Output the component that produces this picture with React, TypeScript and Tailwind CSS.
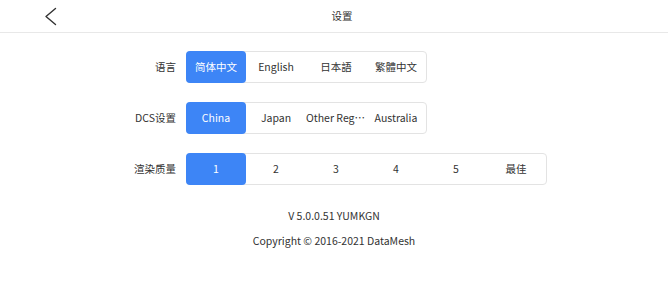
import React, { useState } from 'react';

const FONT = { fontFamily: '"Noto Sans CJK SC", "Noto Sans", sans-serif' };

type Option = { key: string; label: string };

const Segmented: React.FC<{ options: Option[]; value: string; onChange: (v: string) => void }> = ({ options, value, onChange }) => (
    <div className="flex h-[32px] rounded-[4px] border border-[#e3e3e3] bg-white">
        {options.map(opt => (
            <button
                key={opt.key}
                onClick={() => onChange(opt.key)}
                className={`w-[60px] -my-px first:-ml-px h-[32px] truncate px-0 text-[10.5px] leading-[32px] text-center rounded-[4px] ${
                    value === opt.key ? 'bg-[#3d85f6] text-white' : 'text-[#333333]'
                }`}
            >
                {opt.label}
            </button>
        ))}
    </div>
);

const Row: React.FC<{ label: string; children: React.ReactNode }> = ({ label, children }) => (
    <div className="flex items-center">
        <div className="w-[76px] mr-[10px] text-right text-[10.5px] text-[#333333] whitespace-nowrap">{label}</div>
        {children}
    </div>
);

export default function App() {
    const [lang, setLang] = useState('zh');
    const [dcs, setDcs] = useState('china');
    const [quality, setQuality] = useState('1');

    return (
        <div className="w-[668px] h-[288px] bg-white" style={FONT}>
            {/* Header */}
            <div className="grid grid-cols-[88px_1fr_72px] items-center h-[33px] border-b border-[#e8e8e8]">
                <div className="pl-[43px] flex items-center">
                    <svg width="14" height="19" viewBox="0 0 14 19" fill="none">
                        <path d="M12.5 1.5 L3 9.5 L12.5 17.5" stroke="#333" strokeWidth="1.4" strokeLinecap="round" strokeLinejoin="round" />
                    </svg>
                </div>
                <div className="text-center text-[10.5px] text-[#333333]">设置</div>
                <div />
            </div>

            {/* Settings */}
            <div className="pl-[100px] pt-[18px] flex flex-col gap-[19px]">
                <Row label="语言">
                    <Segmented
                        value={lang}
                        onChange={setLang}
                        options={[
                            { key: 'zh', label: '简体中文' },
                            { key: 'en', label: 'English' },
                            { key: 'ja', label: '日本語' },
                            { key: 'tw', label: '繁體中文' },
                        ]}
                    />
                </Row>
                <Row label="DCS设置">
                    <Segmented
                        value={dcs}
                        onChange={setDcs}
                        options={[
                            { key: 'china', label: 'China' },
                            { key: 'japan', label: 'Japan' },
                            { key: 'other', label: 'Other Regions' },
                            { key: 'au', label: 'Australia' },
                        ]}
                    />
                </Row>
                <Row label="渲染质量">
                    <Segmented
                        value={quality}
                        onChange={setQuality}
                        options={['1', '2', '3', '4', '5', '最佳'].map(q => ({ key: q, label: q }))}
                    />
                </Row>
            </div>

            {/* Footer */}
            <div className="mt-[22px] flex flex-col items-center text-[10.5px] text-[#333333] leading-[18px] gap-[7px]">
                <div>V 5.0.0.51 YUMKGN</div>
                <div>Copyright © 2016-2021 DataMesh</div>
            </div>
        </div>
    );
}
